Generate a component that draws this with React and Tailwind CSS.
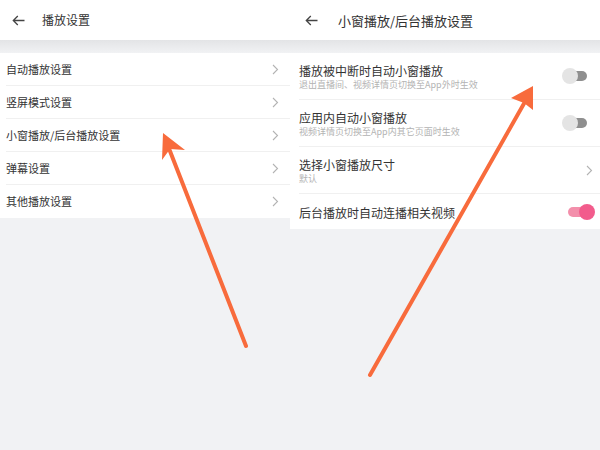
import React from "react";

const font = { fontFamily: '"Noto Sans CJK SC", "Noto Sans", sans-serif' };

function Chevron() {
  return (
    <svg width="7" height="11" viewBox="0 0 7 11" fill="none">
      <path d="M1 1 L5.5 5.5 L1 10" stroke="#b3b3b3" strokeWidth="1.1" />
    </svg>
  );
}

function BackArrow() {
  return (
    <svg width="13" height="11" viewBox="0 0 13 11" fill="none">
      <path d="M12.5 5.5 H1.5 M5.8 1 L1.3 5.5 L5.8 10" stroke="#444" strokeWidth="1.3" />
    </svg>
  );
}

function ToggleOff() {
  return (
    <div className="relative w-[25px] h-[16px] mr-[4px]">
      <div className="absolute right-0 top-[3px] w-[19px] h-[10px] rounded-full bg-[#8f8f8f]" />
      <div className="absolute left-0 top-0 w-[16px] h-[16px] rounded-full bg-[#e4e4e4]" />
    </div>
  );
}

function ToggleOn() {
  return (
    <div className="relative w-[27px] h-[16px] -mr-[4px]">
      <div className="absolute left-0 top-[3px] w-[22px] h-[10px] rounded-full bg-[#f38fab]" />
      <div className="absolute right-0 top-0 w-[16px] h-[16px] rounded-full bg-[#f25c8c]" />
    </div>
  );
}

const leftItems = ["自动播放设置", "竖屏模式设置", "小窗播放/后台播放设置", "弹幕设置", "其他播放设置"];

const rightItems = [
  { title: "播放被中断时自动小窗播放", sub: "退出直播间、视频详情页切换至App外时生效", ctl: "off" },
  { title: "应用内自动小窗播放", sub: "视频详情页切换至App内其它页面时生效", ctl: "off" },
  { title: "选择小窗播放尺寸", sub: "默认", ctl: "chev" },
  { title: "后台播放时自动连播相关视频", sub: null, ctl: "on" },
];

export default function App() {
  return (
    <div className="relative w-[600px] h-[450px] overflow-hidden bg-[#f1f2f4] flex" style={font}>
      {/* Left panel */}
      <div className="w-[290px] flex flex-col">
        <div className="h-[40px] bg-white flex items-center">
          <div className="pl-[12px]">
            <BackArrow />
          </div>
          <div className="pl-[17px] text-[12px] text-[#333] leading-none">播放设置</div>
        </div>
        <div className="h-[13px] bg-gradient-to-b from-[#e3e4e6] to-[#f1f2f4]" />
        <div className="bg-white">
          {leftItems.map((t, i) => (
            <div
              key={t}
              className={`ml-[6px] h-[33px] flex items-center justify-between pr-[11px] ${
                i < leftItems.length - 1 ? "border-b border-[#f0f0f0]" : ""
              }`}
            >
              <span className="text-[11px] text-[#333] leading-none">{t}</span>
              <Chevron />
            </div>
          ))}
        </div>
      </div>

      {/* Right panel */}
      <div className="flex-1 flex flex-col">
        <div className="h-[40px] bg-white flex items-center">
          <div className="pl-[15px]">
            <BackArrow />
          </div>
          <div className="pl-[20px] text-[13px] text-[#333] leading-none">小窗播放/后台播放设置</div>
        </div>
        <div className="h-[13px] bg-gradient-to-b from-[#e3e4e6] to-[#f1f2f4]" />
        <div className="bg-white">
          {rightItems.map((it, i) => (
            <div
              key={it.title}
              className={`ml-[9px] flex items-center justify-between pr-[9px] ${
                it.sub ? "h-[47px]" : "h-[35px]"
              } ${i < rightItems.length - 1 ? "border-b border-[#f0f0f0]" : ""}`}
            >
              <div className="flex flex-col pt-[2px]">
                <span className="text-[12px] text-[#333] leading-none">{it.title}</span>
                {it.sub && (
                  <span className="mt-[3px] text-[9px] text-[#b3b3b3] leading-none">{it.sub}</span>
                )}
              </div>
              {it.ctl === "off" && <ToggleOff />}
              {it.ctl === "on" && <ToggleOn />}
              {it.ctl === "chev" && (
                <div className="-mr-[2px]">
                  <Chevron />
                </div>
              )}
            </div>
          ))}
        </div>
      </div>

      {/* Annotation arrows */}
      <svg
        className="absolute inset-0 pointer-events-none"
        width="600"
        height="450"
        viewBox="0 0 600 450"
      >
        <line x1="246" y1="346" x2="168" y2="146" stroke="#f86b3c" strokeWidth="4" strokeLinecap="round" />
        <polygon points="163,133 185,150 170,149 162,160" fill="#f86b3c" />
        <line x1="370" y1="375" x2="526" y2="100" stroke="#f86b3c" strokeWidth="4" strokeLinecap="round" />
        <polygon points="533,86 533,110 524,103 511,98" fill="#f86b3c" />
      </svg>
    </div>
  );
}
